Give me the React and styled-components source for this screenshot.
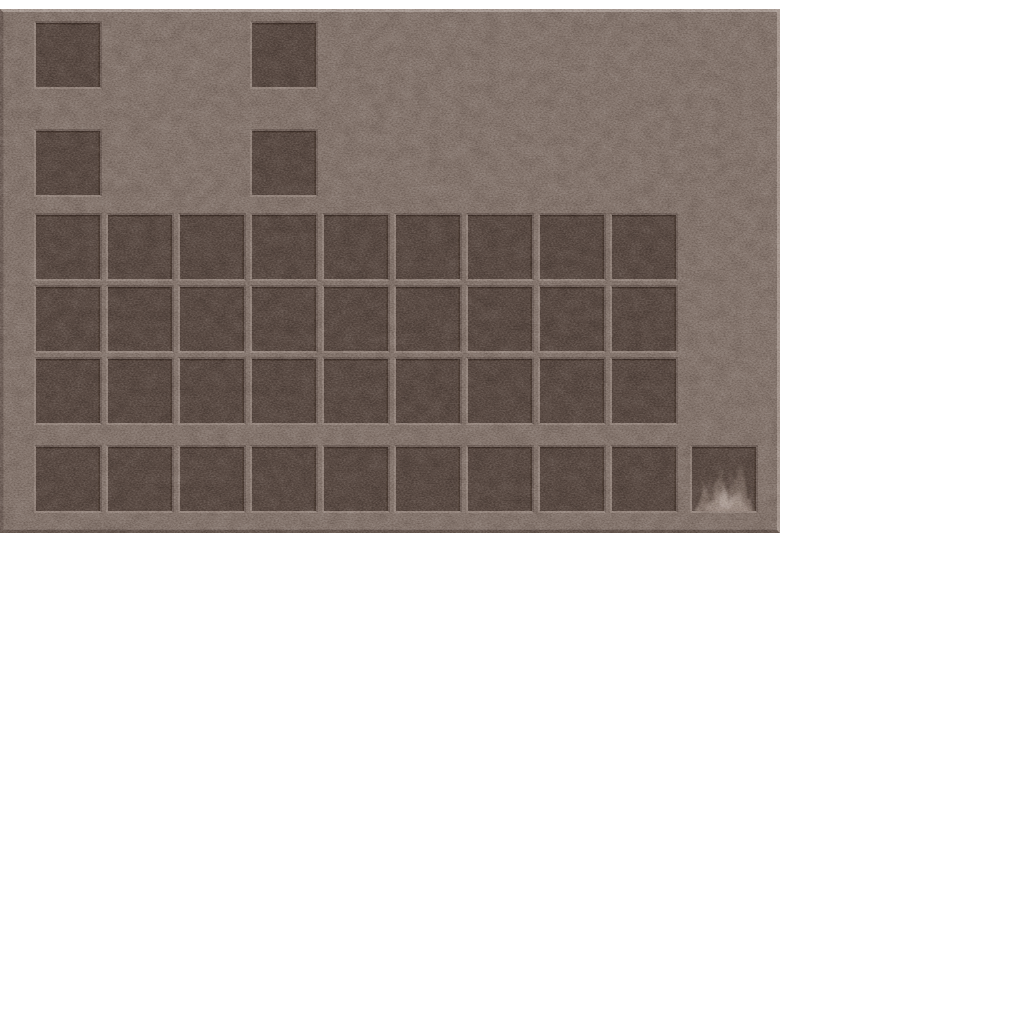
import React from "react";
import styled, { createGlobalStyle } from "styled-components";

const GlobalStyle = createGlobalStyle`
  *, *::before, *::after { box-sizing: border-box; }
  body { margin: 0; background: #fff; font-family: "Liberation Sans", sans-serif; }
`;

const Page = styled.main`
  padding-top: 9px;
`;

const Panel = styled.section`
  position: relative;
  max-width: 780px;
  padding: 9px 19px 17px 31px;
  background: #84756d;
  border: 3px solid;
  border-color: #a89b94 #a5978f #65564e #6f6059;
  box-shadow: inset 1px 0 0 #7b6c64, inset 0 -1px 0 #7b6c65;
`;

const Crafting = styled.div`
  display: grid;
  grid-template-columns: repeat(2, 68px);
  column-gap: 148px;
  row-gap: 40px;
  margin-bottom: 16px;
`;

const Storage = styled.div`
  display: grid;
  grid-template-columns: repeat(9, 68px);
  gap: 4px;
`;

const Footer = styled.div`
  display: flex;
  gap: 12px;
  margin-top: 20px;
`;

const SlotButton = styled.button`
  display: block;
  width: 68px;
  height: 68px;
  padding: 0;
  overflow: hidden;
  appearance: none;
  border: 2px solid;
  border-color: #6f6059 #71625b #95867e #93847c;
  border-radius: 1px;
  background: #5a4b44;
  box-shadow: inset 0 1px 0 #3f312b, inset -1px 0 0 #493a33,
    inset 0 2px 0 #504139, inset -2px 0 0 #514239;
`;

const Texture = styled.svg`
  position: absolute;
  inset: -3px;
  width: calc(100% + 6px);
  height: calc(100% + 6px);
  pointer-events: none;
`;

const Grain = styled.rect`
  mix-blend-mode: soft-light;
  opacity: ${(p) => p.$strength};
`;

const FlameArt = styled.svg`
  display: block;
  width: 64px;
  height: 64px;
`;

function StoneTexture() {
  return (
    <Texture aria-hidden="true">
      <defs>
        <filter id="specks" x="0" y="0" width="100%" height="100%" colorInterpolationFilters="sRGB">
          <feTurbulence type="fractalNoise" baseFrequency="0.5 0.7" numOctaves="2" seed="7" />
          <feColorMatrix values="1.6 0 0 0 -0.3  1.6 0 0 0 -0.3  1.6 0 0 0 -0.3  0 0 0 0 1" />
        </filter>
        <filter id="mottle" x="0" y="0" width="100%" height="100%" colorInterpolationFilters="sRGB">
          <feTurbulence type="fractalNoise" baseFrequency="0.07 0.08" numOctaves="4" seed="31" />
          <feColorMatrix values="1 0 0 0 0  1 0 0 0 0  1 0 0 0 0  0 0 0 0 1" />
        </filter>
      </defs>
      <Grain width="100%" height="100%" filter="url(#specks)" $strength={0.24} />
      <Grain width="100%" height="100%" filter="url(#mottle)" $strength={0.17} />
    </Texture>
  );
}

function Flame() {
  return (
    <FlameArt viewBox="0 0 64 64" aria-hidden="true">
      <defs>
        <linearGradient id="outer" x1="0" y1="0" x2="0" y2="1">
          <stop offset="0" stopColor="#78685f" stopOpacity="0.35" />
          <stop offset="0.5" stopColor="#83736a" stopOpacity="0.8" />
          <stop offset="1" stopColor="#8b7b72" />
        </linearGradient>
        <linearGradient id="inner" x1="0" y1="0" x2="0" y2="1">
          <stop offset="0" stopColor="#8b7b72" stopOpacity="0.3" />
          <stop offset="0.6" stopColor="#a1928a" stopOpacity="0.9" />
          <stop offset="1" stopColor="#9b8b82" stopOpacity="0.9" />
        </linearGradient>
        <filter id="soft" x="-10%" y="-10%" width="120%" height="120%">
          <feTurbulence type="fractalNoise" baseFrequency="0.3 0.08" numOctaves="2" seed="5" result="n" />
          <feDisplacementMap in="SourceGraphic" in2="n" scale="5" xChannelSelector="R" yChannelSelector="G" />
          <feGaussianBlur stdDeviation="0.8 1.2" />
        </filter>
      </defs>
      <g filter="url(#soft)">
        <path
          fill="url(#outer)"
          d="M2 66 L8 54 L10 46 L10 32 L14 42 L18 51 L22 40 L24 30 L27 34 L28 17 L31 33 L34 40 L37 45 L41 36 L45 31 L48 13 L51 29 L54 38 L55 49 L58 54 L63 66 Z"
        />
        <path
          fill="#75655d"
          opacity="0.45"
          d="M15 43 L18 25 L20 34 L19 50 Z M35 38 L38 20 L41 34 L38 44 Z M57 50 L61 28 L61 44 L59 56 Z"
        />
        <path
          fill="url(#inner)"
          d="M10 66 L17 56 L22 54 L26 42 L29 46 L32 36 L35 50 L38 54 L42 45 L45 48 L48 40 L51 54 L58 66 Z"
        />
        <path fill="#b7aaa3" opacity="0.6" d="M27 54 L32 39 L35 49 L37 58 L40 48 L41 55 L38 62 L29 60 Z" />
        <path fill="#64544c" opacity="0.5" d="M17 51 L19 38 L21 45 L20 56 Z M36 52 L36 42 L38 46 L38 55 Z" />
      </g>
    </FlameArt>
  );
}

function Slot({ label, children }) {
  return (
    <SlotButton type="button" aria-label={label}>
      {children}
    </SlotButton>
  );
}

function slots(count, name) {
  return Array.from({ length: count }, (_, i) => (
    <Slot key={i} label={`${name} ${i + 1}`} />
  ));
}

export default function App() {
  return (
    <>
      <GlobalStyle />
      <Page>
        <Panel aria-label="Inventory">
          <Crafting>{slots(4, "Equipment slot")}</Crafting>
          <Storage>{slots(27, "Storage slot")}</Storage>
          <Footer>
            <Storage>{slots(9, "Quick slot")}</Storage>
            <Slot label="Burn item">
              <Flame />
            </Slot>
          </Footer>
          <StoneTexture />
        </Panel>
      </Page>
    </>
  );
}
